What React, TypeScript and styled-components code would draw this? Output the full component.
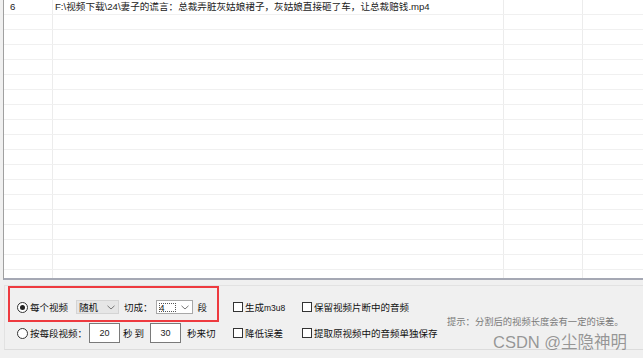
import React from "react";
import styled, { createGlobalStyle } from "styled-components";

const Global = createGlobalStyle`
  html, body { margin: 0; padding: 0; background: #f0f0f0; }
  body { width: 643px; height: 358px; overflow: hidden; font-family: "Noto Sans CJK SC", "Liberation Sans", sans-serif; }
`;

const Page = styled.div`
  position: relative;
  width: 643px;
  height: 358px;
  background: #f0f0f0;
  display: flex;
  flex-direction: column;
  overflow: hidden;
`;

const Table = styled.div`
  margin-left: 3px;
  height: 278px;
  background: #fff;
  border-left: 1px solid #a0a0a0;
  border-bottom: 2px solid #a5a8b4;
  overflow: hidden;
  flex-shrink: 0;
`;

const Row = styled.div`
  display: grid;
  grid-template-columns: 49px 451px 79px 80px;
  height: 15px;
  border-bottom: 1px solid #f0f0f0;
  box-sizing: border-box;
`;

const Cell = styled.div<{ $pad?: number }>`
  border-right: 1px solid #ececec;
  font-family: "Liberation Sans", "Noto Sans CJK SC", sans-serif;
  font-size: 9.6px;
  line-height: 14px;
  color: #222;
  white-space: nowrap;
  padding-left: ${(p) => p.$pad ?? 2}px;
  overflow: hidden;
`;

const Panel = styled.div`
  margin: 5px 0 0 4px;
  height: 65px;
  box-sizing: border-box;
  border-top: 1px solid #e2e2e2;
  border-left: 1px solid #e2e2e2;
  border-bottom: 1px solid #dcdcdc;
  display: grid;
  grid-template-columns: 216px 69px 145px 1fr;
  grid-template-rows: 20px 20px;
  row-gap: 6px;
  padding: 11px 0 0 12px;
  align-items: center;
`;

const Group = styled.div`
  display: flex;
  align-items: center;
  height: 20px;
  font-size: 9.5px;
  color: #111;
  white-space: nowrap;
`;

const Label = styled.span<{ $ml?: number }>`
  margin-left: ${(p) => p.$ml ?? 0}px;
  font-size: 9.5px;
  line-height: 12px;
  color: #111;
`;

const Radio = styled.span<{ $checked?: boolean }>`
  width: 11px;
  height: 11px;
  border-radius: 50%;
  border: 1px solid #333;
  box-sizing: border-box;
  background: #fff;
  display: inline-flex;
  align-items: center;
  justify-content: center;
  margin-right: 2px;
  &::after {
    content: "";
    width: 5px;
    height: 5px;
    border-radius: 50%;
    background: ${(p) => (p.$checked ? "#222" : "transparent")};
  }
`;

const Combo = styled.div<{ $w: number; $bg: string; $ml: number }>`
  width: ${(p) => p.$w}px;
  height: 14px;
  margin-left: ${(p) => p.$ml}px;
  box-sizing: border-box;
  border: 1px solid ${(p) => (p.$bg === "#fff" ? "#a8a8a8" : "#d4d4d4")};
  background: ${(p) => p.$bg};
  display: flex;
  align-items: center;
  justify-content: space-between;
  padding: 0 3px 0 2px;
  font-size: 9.5px;
`;

const Focus = styled.span`
  border: 1px dotted #555;
  width: 17px;
  height: 9px;
  font-size: 9px;
  line-height: 9px;
  font-family: "Liberation Sans", sans-serif;
  box-sizing: border-box;
`;

const Chevron = () => (
  <svg width="8" height="5" viewBox="0 0 8 5">
    <path d="M0.5 0.8 L4 4 L7.5 0.8" fill="none" stroke="#777" strokeWidth="1" />
  </svg>
);

const Input = styled.div<{ $ml: number }>`
  width: 31px;
  height: 20px;
  margin-left: ${(p) => p.$ml}px;
  box-sizing: border-box;
  border: 1px solid #7a7a7a;
  background: #fff;
  display: flex;
  align-items: center;
  justify-content: center;
  font-family: "Liberation Sans", sans-serif;
  font-size: 9px;
  color: #222;
`;

const Check = styled.span`
  width: 10px;
  height: 10px;
  border: 1px solid #333;
  background: #fff;
  box-sizing: border-box;
  margin-right: 2px;
  flex-shrink: 0;
`;

const Hint = styled.div`
  grid-column: 4;
  grid-row: 1 / span 2;
  align-self: center;
  font-size: 9.3px;
  color: #7a7a7a;
  white-space: nowrap;
  margin-top: 1px;
`;

const RedBox = styled.div`
  position: absolute;
  left: 8px;
  top: 286px;
  width: 211px;
  height: 36px;
  border: 2px solid #ee3a3f;
  box-sizing: border-box;
  pointer-events: none;
`;

const Watermark = styled.div`
  position: absolute;
  left: 493px;
  top: 329px;
  font-family: "Liberation Sans", "Noto Sans CJK SC", sans-serif;
  font-size: 16.5px;
  color: rgba(120, 120, 120, 0.75);
  white-space: nowrap;
`;

const Mono = styled.span`
  font-family: "Liberation Sans", sans-serif;
  font-size: 8.5px;
`;

const rows = Array.from({ length: 19 });

export default function App() {
  return (
    <Page>
      <Global />
      <Table>
        {rows.map((_, i) => (
          <Row key={i}>
            <Cell $pad={6}>{i === 0 ? "6" : ""}</Cell>
            <Cell $pad={2}>
              {i === 0
                ? "F:\\视频下载\\24\\妻子的谎言：总裁弄脏灰姑娘裙子，灰姑娘直接砸了车，让总裁赔钱.mp4"
                : ""}
            </Cell>
            <Cell />
            <Cell />
          </Row>
        ))}
      </Table>
      <Panel>
        <Group>
          <Radio $checked />
          <Label>每个视频</Label>
          <Combo $w={43} $bg="#e6e6e6" $ml={8}>
            <span>随机</span>
            <Chevron />
          </Combo>
          <Label $ml={5}>切成：</Label>
          <Combo $w={37} $bg="#fff" $ml={3}>
            <Focus>4</Focus>
            <Chevron />
          </Combo>
          <Label $ml={5}>段</Label>
        </Group>
        <Group>
          <Check />
          <Label>生成<Mono>m3u8</Mono></Label>
        </Group>
        <Group>
          <Check />
          <Label>保留视频片断中的音频</Label>
        </Group>
        <Hint>提示：分割后的视频长度会有一定的误差。</Hint>
        <Group>
          <Radio />
          <Label>按每段视频：</Label>
          <Input $ml={2}>20</Input>
          <Label $ml={3}>秒</Label>
          <Label $ml={2}>到</Label>
          <Input $ml={6}>30</Input>
          <Label $ml={6}>秒来切</Label>
        </Group>
        <Group>
          <Check />
          <Label>降低误差</Label>
        </Group>
        <Group>
          <Check />
          <Label>提取原视频中的音频单独保存</Label>
        </Group>
      </Panel>
      <RedBox />
      <Watermark>CSDN @尘隐神明</Watermark>
    </Page>
  );
}
